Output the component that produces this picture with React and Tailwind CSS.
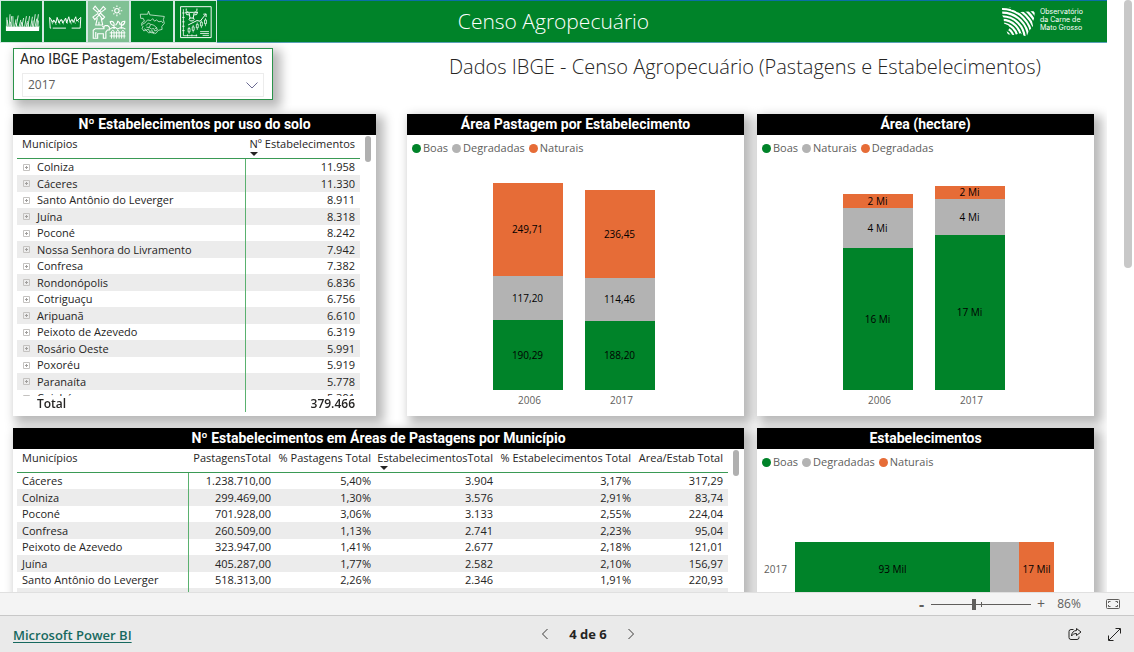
import { useState } from "react";

const TABLE_ONE = [
  ["Colniza", "11.958"],
  ["Cáceres", "11.330"],
  ["Santo Antônio do Leverger", "8.911"],
  ["Juína", "8.318"],
  ["Poconé", "8.242"],
  ["Nossa Senhora do Livramento", "7.942"],
  ["Confresa", "7.382"],
  ["Rondonópolis", "6.836"],
  ["Cotriguaçu", "6.756"],
  ["Aripuanã", "6.610"],
  ["Peixoto de Azevedo", "6.319"],
  ["Rosário Oeste", "5.991"],
  ["Poxoréu", "5.919"],
  ["Paranaíta", "5.778"],
  ["Cuiabá", "5.391"],
];

const TABLE_TWO = [
  ["Cáceres", "1.238.710,00", "5,40%", "3.904", "3,17%", "317,29"],
  ["Colniza", "299.469,00", "1,30%", "3.576", "2,91%", "83,74"],
  ["Poconé", "701.928,00", "3,06%", "3.133", "2,55%", "224,04"],
  ["Confresa", "260.509,00", "1,13%", "2.741", "2,23%", "95,04"],
  ["Peixoto de Azevedo", "323.947,00", "1,41%", "2.677", "2,18%", "121,01"],
  ["Juína", "405.287,00", "1,77%", "2.582", "2,10%", "156,97"],
  ["Santo Antônio do Leverger", "518.313,00", "2,26%", "2.346", "1,91%", "220,93"],
  ["Aripuanã", "397.540,00", "1,73%", "2.301", "1,87%", "172,77"],
];

const GREEN = "bg-[#008329]";
const GRAY = "bg-[#b3b3b3]";
const ORANGE = "bg-[#e66c37]";

function GrassIcon() {
  return (
    <svg viewBox="0 0 130 130" className="size-full" fill="#fff">
      <path d="M15 95V78l3 4h100l3-4-1 17z" />
      <path
        d="M18 84V52M22 84l-3-24M25 84l3-42M30 84l3-36M34 84l-5-18M38 84l-1-36M42 84l5-26M47 84l7-38M52 84l-6-14M56 84l6-24M60 84l4-14M65 84l6-30M70 84l-6-18M74 84l6-36M79 84l4-20M84 84l6-36M88 84l-4-14M93 84l6-34M98 84l3-22M102 84l6-42M107 84l6-28M112 84l6-42M116 84l2-22"
        fill="none"
        stroke="#fff"
        strokeWidth="2.6"
      />
    </svg>
  );
}

function FieldIcon() {
  return (
    <svg viewBox="130 0 130 130" className="size-full" fill="none" stroke="#fff" strokeWidth="3">
      <path d="M152 86h-3l-2-34 11 16 2-8 7 10 4-18 6 18 7-12 5 12 9-16 3 16 7-20 4 18 6-10 4 10 8-18 3 14 13-12-2 34h-27M157 86h42" />
      <path d="M152 60l5 14M163 62l5 14M176 58l4 16M187 60l4 14M199 58l5 14M212 60l4 14M224 60l5 12M236 60l4 8" strokeWidth="2" />
    </svg>
  );
}

function FarmIcon() {
  return (
    <svg viewBox="260 0 130 130" className="size-full" fill="none" stroke="#fff" strokeWidth="3.5">
      <path d="M290 36l-14-12 6-8 13 16zM296 32l12-14 7 7-15 11zM290 40l-15 11 6 8 14-15zM298 38l14 13-6 7-12-15z" />
      <path d="M289 54l-5 22h22l-5-22M294 66v10" />
      <circle cx="351" cy="31" r="7" />
      <path d="M351 14v5M351 43v5M334 31h5M363 31h5M340 20l3 3M359 39l3 3M362 20l-3 3M343 39l-3 3" />
      <path d="M276 118V93l6-5h28v-7l4-3h8l5 5v9h-6l-5 6v20h-8v-14h-18v14z" />
      <path d="M309 84l-4-4M284 98v18" />
      <path d="M330 65c0 12 10 12 12 14 2-12-4-16-12-14zM342 79v10M354 63c0 9-6 10-7 14M376 64c1 12-8 12-11 14-2-10 3-14 11-14zM365 78v10M353 64c8 2 8 8 8 12M329 89c8-6 18-6 24 0 8-6 17-6 25 0" />
      <path d="M334 119V96l4-3 4 3v23M350 119V96l4-3 4 3v23M366 119V96l4-3 4 3v23M328 101h50M328 111h50" strokeWidth="3" />
    </svg>
  );
}

function MapIcon() {
  return (
    <svg viewBox="391 0 130 130" className="size-full" fill="none" stroke="#dcf0e0" strokeWidth="2.4">
      <path d="M420 42h23l3-10 4 12 46 5-3 10 3 12-8 10 1 9-12 3-8 10-8-3-5 2" />
      <path d="M420 42l1 13h8l4 9-8 5-1 8 5 5-4 4 6 9 7-3 8 9 12-2 6 5" />
      <path d="M443 60l10 2 6-6 6 8 6-4 8 6 8-2 5 6M443 60l-9 10-8 4M438 78l7-8 8 4-5 10-9-1M448 84l7 5 7-2 4 8 8-3-3-8-8-7-9-3M432 88l8 4 6-3 3 8 9-3 4 8M466 88l7-4" />
    </svg>
  );
}

function ChartIcon() {
  return (
    <svg viewBox="521 0 130 130" className="size-full" fill="none" stroke="#fff" strokeWidth="3">
      <path d="M538 18h97v98h-97z" />
      <path d="M547 26v84h44M543 38h8M543 52h8M543 66h8M543 80h8M543 94h8M560 106v6M574 106v6M588 106v6" strokeWidth="2.5" />
      <path d="M556 24c-2 10 4 12 10 12h13c8 0 12-4 11-12M563 38l-9-3 3 8 8 1M583 38l9-3-3 8-8 1M565 37l3 18M581 37l-3 18M567 54h12l2 5-4 4h-8l-4-4z" />
      <path d="M562 76l28-14 10 2 18-22M610 42l9-1v10" />
      <path d="M565 82v22M578 76v24M591 68v24M604 62v24M617 54v26" strokeWidth="2" />
      <path d="M562 87h6v11h-6zM575 82h6v11h-6zM588 74h6v11h-6zM601 67h6v12h-6zM614 60h6v12h-6z" fill="#008329" strokeWidth="2.5" />
      <path d="M600 97h28M600 103h28M608 109h20" strokeWidth="2.5" />
    </svg>
  );
}

const STRIPES = [14, 25, 36, 47, 58, 69, 80, 91, 102, 113, 124];

function StateLogo() {
  return (
    <svg viewBox="64 12 104 94" className="h-[31px] w-[35px]" fill="none" stroke="#fff" strokeWidth="6.5">
      <clipPath id="state">
        <path d="M66 18l25-3 4 9 8-2 9 9 54-4-3 24-5 12 2 10-14 18-5 13-9-2-10-7-20 5-18-2-4-9 8-7-2-11-14-6-1-16-4-8z" />
      </clipPath>
      <g clipPath="url(#state)">
        {STRIPES.map((r) => (
          <circle key={r} cx="66" cy="112" r={r} />
        ))}
      </g>
    </svg>
  );
}

const NAV = [
  ["Pastagens", GrassIcon, "bg-[#008329]"],
  ["Campo", FieldIcon, "bg-[#008329]"],
  ["Censo Agropecuário", FarmIcon, "bg-[#80c194]"],
  ["Mapa", MapIcon, "bg-[#008329]"],
  ["Indicadores", ChartIcon, "bg-[#008329]"],
];

function Card({ title, className, children }) {
  return (
    <section
      className={`flex min-w-0 flex-col bg-white shadow-[5px_5px_10px_3px_rgba(0,0,0,0.28)] ${className}`}
    >
      <h2 className="h-[21px] shrink-0 bg-black text-center font-[Roboto] text-sm leading-[20px] font-bold text-white">
        {title}
      </h2>
      {children}
    </section>
  );
}

function ScrollGutter() {
  return (
    <div className="flex w-4 shrink-0 justify-center pt-px">
      <div className="h-[26px] w-1.5 rounded-full bg-[#b0b0b0]" />
    </div>
  );
}

function SortMark() {
  return (
    <svg viewBox="0 0 8 4" className="absolute top-[17px] left-1 h-1 w-2" fill="#252423">
      <path d="M0 0h8L4 4z" />
    </svg>
  );
}

function Legend({ items }) {
  return (
    <ul className="flex h-[26px] items-center gap-1 pl-[5px] text-[11px] text-[#605e5c]">
      {items.map(([name, color]) => (
        <li key={name} className="flex items-center gap-0.5">
          <span className={`size-[9px] rounded-full ${color}`} />
          {name}
        </li>
      ))}
    </ul>
  );
}

function ColumnChart({ columns }) {
  return (
    <div className="flex flex-1 items-end justify-center gap-[22px] pr-1 pb-2">
      {columns.map(([year, parts]) => (
        <div key={year} className="flex w-[70px] flex-col text-center text-[10px]">
          {parts.map(([label, height, color]) => (
            <div
              key={label}
              className={`flex items-center justify-center text-black ${color}`}
              style={{ height }}
            >
              {label}
            </div>
          ))}
          <span className="pt-0.5 pl-1 leading-4 text-[#605e5c]">{year}</span>
        </div>
      ))}
    </div>
  );
}

function Expander() {
  return (
    <button type="button" aria-label="Expandir" className="flex size-[7px] items-center justify-center">
      <svg viewBox="0 0 7 7" className="size-[7px]" fill="none" stroke="#c4c2c0">
        <path d="M.5 .5h6v6h-6z" />
        <path d="M2 3.500h3M3.500 2v3" stroke="#a19f9d" />
      </svg>
    </button>
  );
}

function LandUseTable() {
  return (
    <div className="flex min-h-0 flex-1 pb-1 pl-1">
      <div className="min-w-0 flex-1 overflow-hidden">
        <table className="w-full table-fixed border-separate border-spacing-0 text-[11px] text-[#252423]">
          <colgroup>
            <col className="w-[229px]" />
            <col className="w-[114px]" />
          </colgroup>
          <thead>
            <tr className="h-6">
              <th className="border-b border-[#3a9a55] pl-[5px] text-left align-top leading-[18px] font-normal">
                Municípios
              </th>
              <th className="relative border-b border-[#3a9a55] pr-[5px] text-right align-top leading-[18px] font-normal whitespace-nowrap">
                Nº Estabelecimentos
                <SortMark />
              </th>
            </tr>
          </thead>
          <tbody>
            {TABLE_ONE.map(([city, value]) => (
              <tr key={city} className="h-4 even:h-[17px] even:bg-[#ececec]">
                <td className="border-r border-r-[#5ab16f] p-0 leading-4">
                  <div className="flex items-center gap-[7px] pl-1.5">
                    <Expander />
                    {city}
                  </div>
                </td>
                <td className="p-0 pr-[5px] text-right leading-4">{value}</td>
              </tr>
            ))}
          </tbody>
          <tfoot>
            <tr className="text-xs font-semibold">
              <td className="sticky bottom-0 border-r border-r-[#5ab16f] bg-white p-0 pl-5 leading-4">Total</td>
              <td className="sticky bottom-0 bg-white p-0 pr-[5px] text-right leading-4">379.466</td>
            </tr>
          </tfoot>
        </table>
      </div>
      <ScrollGutter />
    </div>
  );
}

const HEADS = [
  "PastagensTotal",
  "% Pastagens Total",
  "EstabelecimentosTotal",
  "% Estabelecimentos Total",
  "Area/Estab Total",
];

function CityTable() {
  return (
    <div className="flex min-h-0 flex-1 pb-1 pl-1">
      <div className="min-w-0 flex-1 overflow-hidden">
        <table className="w-full table-fixed border-separate border-spacing-0 text-[11px] text-[#252423]">
          <colgroup>
            <col className="w-[172px]" />
            <col className="w-[87px]" />
            <col className="w-[100px]" />
            <col className="w-[122px]" />
            <col className="w-[138px]" />
            <col className="w-[92px]" />
          </colgroup>
          <thead>
            <tr className="h-6">
              <th className="border-b border-[#3a9a55] pl-[5px] text-left align-top leading-[18px] font-normal">
                Municípios
              </th>
              {HEADS.map((head, i) => (
                <th
                  key={head}
                  className="relative border-b border-[#3a9a55] pr-[5px] text-right align-top leading-[18px] font-normal whitespace-nowrap"
                >
                  {head}
                  {i === 2 && <SortMark />}
                </th>
              ))}
            </tr>
          </thead>
          <tbody>
            {TABLE_TWO.map(([city, ...values]) => (
              <tr key={city} className="h-4 even:h-[17px] even:bg-[#ececec]">
                <td className="border-r border-r-[#5ab16f] p-0 pl-[5px] leading-4">{city}</td>
                {values.map((value, i) => (
                  <td key={i} className="p-0 pr-[5px] text-right leading-4">
                    {value}
                  </td>
                ))}
              </tr>
            ))}
          </tbody>
        </table>
      </div>
      <ScrollGutter />
    </div>
  );
}

function Header() {
  return (
    <header className="grid h-[43px] grid-cols-[1fr_auto_1fr] border-y border-t-[#0b6fa6] border-b-[#5aa0b8] bg-[#008329]">
      <nav className="-my-px flex w-[217px]">
        {NAV.map(([name, Icon, color]) => (
          <button key={name} type="button" aria-label={name} className="h-[43px] flex-1 bg-[#d3e8e2] p-px">
            <span className={`block size-full ${color}`}>
              <Icon />
            </span>
          </button>
        ))}
      </nav>
      <h1 className="text-center text-[21px] leading-[40px] font-light text-white">Censo Agropecuário</h1>
      <div className="flex items-center justify-end gap-1 pr-6 text-white">
        <StateLogo />
        <p className="pb-1 font-[Inter] text-[7px] leading-[8px]">
          Observatório
          <br />
          da Carne de
          <br />
          Mato Grosso
        </p>
      </div>
    </header>
  );
}

function YearFilter() {
  return (
    <div className="flex h-[52px] w-[260px] flex-col border border-[#2a934a] bg-white shadow-[5px_5px_10px_3px_rgba(0,0,0,0.28)]">
      <label htmlFor="year" className="pl-1.5 font-[Roboto] text-sm leading-5 whitespace-nowrap text-[#252423]">
        Ano IBGE Pastagem/Estabelecimentos
      </label>
      <div className="relative mx-2 mt-1">
        <select
          id="year"
          defaultValue="2017"
          className="block h-[24px] w-full appearance-none border border-[#ececec] bg-white pl-[5px] text-xs text-[#605e5c]"
        >
          <option>2017</option>
          <option>2006</option>
        </select>
        <svg
          viewBox="0 0 12 7"
          className="pointer-events-none absolute top-[9px] right-1.5 h-[7px] w-3"
          fill="none"
          stroke="#6a6a92"
        >
          <path d="M.5 .5L6 6l5.500-5.500" />
        </svg>
      </div>
    </div>
  );
}

function ZoomBar() {
  const [zoom, setZoom] = useState(43);
  return (
    <div className="flex h-[23px] shrink-0 items-center justify-end border-t border-[#e0e0e0] bg-[#f4f4f4] pr-3.5 text-[#605e5c]">
      <button type="button" aria-label="Reduzir" className="w-3 text-left text-base leading-none font-bold">
        -
      </button>
      <div className="relative flex h-[13px] w-[100px] items-center">
        <span className="absolute top-1 left-[50px] h-[5px] w-px bg-[#605e5c]" />
        <input
          type="range"
          aria-label="Zoom"
          min="0"
          max="100"
          value={zoom}
          onChange={(e) => setZoom(Number(e.target.value))}
          className="h-px w-full appearance-none bg-[#605e5c] [&::-webkit-slider-thumb]:h-[11px] [&::-webkit-slider-thumb]:w-1 [&::-webkit-slider-thumb]:appearance-none [&::-webkit-slider-thumb]:bg-[#605e5c]"
        />
      </div>
      <button type="button" aria-label="Ampliar" className="w-5 text-sm leading-none">
        +
      </button>
      <span className="w-9 text-center text-xs">86%</span>
      <button type="button" aria-label="Ajustar à página" className="ml-[19px]">
        <svg viewBox="0 0 14 10" className="h-2.5 w-3.5" fill="none" stroke="#605e5c">
          <rect x=".5" y=".5" width="13" height="9" rx="1" />
          <path d="M2.500 4V2.500H4.500M9.500 2.500h2V4M11.500 6v1.500h-2M4.500 7.500h-2V6" />
        </svg>
      </button>
    </div>
  );
}

function Footer() {
  return (
    <footer className="grid h-[37px] shrink-0 grid-cols-[1fr_auto_1fr] items-center border-t border-[#c8c8c8] bg-[#eaeaea] px-[13px]">
      <div>
        <a href="#" className="text-[13px] font-semibold text-[#17695f] underline underline-offset-2">
          Microsoft Power BI
        </a>
      </div>
      <div className="flex items-center gap-5 pl-[42px]">
        <button type="button" aria-label="Página anterior">
          <svg viewBox="0 0 8 12" className="h-3 w-2" fill="none" stroke="#3b3a39">
            <path d="M6.500 1l-5 5 5 5" />
          </svg>
        </button>
        <span className="text-[13px] leading-5 font-bold text-[#252423]">4 de 6</span>
        <button type="button" aria-label="Próxima página">
          <svg viewBox="0 0 8 12" className="h-3 w-2" fill="none" stroke="#3b3a39">
            <path d="M1.500 1l5 5-5 5" />
          </svg>
        </button>
      </div>
      <div className="flex items-center justify-end gap-[26px]">
        <button type="button" aria-label="Compartilhar">
          <svg viewBox="0 0 14 14" className="size-3.5" fill="none" stroke="#252423">
            <path d="M5.500 2.500H3a2 2 0 0 0-2 2V10.500a2 2 0 0 0 2 2h6a2 2 0 0 0 2-2V9.500" />
            <path d="M8.500 1.500L13 5 8.500 8.500V6.500C6 6.500 4.500 7.500 3.500 9 3.500 6 5.500 3.500 8.500 3.500z" strokeLinejoin="round" />
          </svg>
        </button>
        <button type="button" aria-label="Tela cheia">
          <svg viewBox="0 0 13 13" className="size-[13px]" fill="none" stroke="#252423">
            <path d="M1 12L12 1M7.500 .5h5v5M.5 7.500v5h5" />
          </svg>
        </button>
      </div>
    </footer>
  );
}

export default function App() {
  return (
    <div className="flex h-screen flex-col bg-white font-['Open_Sans',sans-serif]">
      <div className="flex min-h-0 flex-1 overflow-hidden">
        <main className="min-w-0 flex-1 overflow-hidden">
          <Header />
          <div className="flex flex-col gap-3 px-[13px] pt-[5px]">
            <div className="flex h-[54px] items-start">
              <YearFilter />
              <h2 className="flex-1 pt-[5px] pl-[123px] text-center text-xl leading-7 font-light whitespace-nowrap text-[#252423]">
                Dados IBGE - Censo Agropecuário (Pastagens e Estabelecimentos)
              </h2>
            </div>
            <div className="grid grid-cols-[731fr_337fr] gap-x-[13px] gap-y-3">
              <div className="grid grid-cols-[363fr_337fr] gap-[31px]">
                <Card title="Nº Estabelecimentos por uso do solo" className="h-[302px]">
                  <LandUseTable />
                </Card>
                <Card title="Área Pastagem por Estabelecimento" className="h-[302px]">
                  <Legend items={[["Boas", GREEN], ["Degradadas", GRAY], ["Naturais", ORANGE]]} />
                  <ColumnChart
                    columns={[
                      ["2006", [["249,71", 93, ORANGE], ["117,20", 44, GRAY], ["190,29", 70, GREEN]]],
                      ["2017", [["236,45", 88, ORANGE], ["114,46", 43, GRAY], ["188,20", 69, GREEN]]],
                    ]}
                  />
                </Card>
              </div>
              <Card title="Área (hectare)" className="h-[302px]">
                <Legend items={[["Boas", GREEN], ["Naturais", GRAY], ["Degradadas", ORANGE]]} />
                <ColumnChart
                  columns={[
                    ["2006", [["2 Mi", 14, ORANGE], ["4 Mi", 40, GRAY], ["16 Mi", 142, GREEN]]],
                    ["2017", [["2 Mi", 13, ORANGE], ["4 Mi", 36, GRAY], ["17 Mi", 155, GREEN]]],
                  ]}
                />
              </Card>
              <Card title="Nº Estabelecimentos em Áreas de Pastagens por Município" className="h-[240px]">
                <CityTable />
              </Card>
              <Card title="Estabelecimentos" className="h-[240px]">
                <Legend items={[["Boas", GREEN], ["Degradadas", GRAY], ["Naturais", ORANGE]]} />
                <div className="mt-[67px] flex items-center gap-2 pr-10 pl-[7px] text-[10px]">
                  <span className="leading-4 text-[#605e5c]">2017</span>
                  <div className="flex h-[54px] flex-1 text-black">
                    <div className={`flex flex-[196] items-center justify-center ${GREEN}`}>93 Mil</div>
                    <div className={`flex-[29] ${GRAY}`} />
                    <div className={`flex flex-[35] items-center justify-center whitespace-nowrap ${ORANGE}`}>17 Mil</div>
                  </div>
                </div>
              </Card>
            </div>
          </div>
        </main>
        <div className="flex w-[27px] shrink-0 justify-end pr-0.5">
          <div className="h-[268px] w-2 rounded-full bg-[#c8c8c8]" />
        </div>
      </div>
      <ZoomBar />
      <Footer />
    </div>
  );
}
